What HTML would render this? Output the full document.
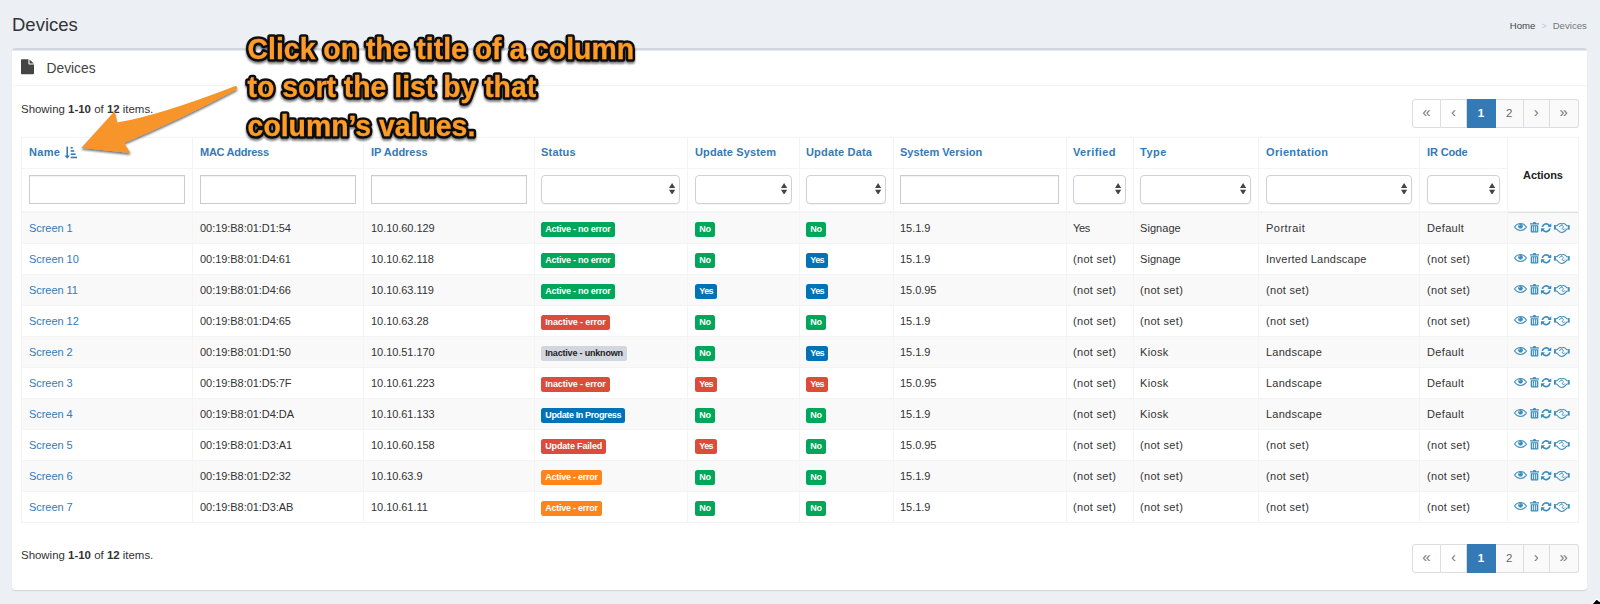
<!DOCTYPE html>
<html><head><meta charset="utf-8"><title>Devices</title>
<style>
*{box-sizing:border-box}
html,body{margin:0;padding:0}
body{width:1600px;height:604px;overflow:hidden;background:#ecf0f5;font-family:"Liberation Sans",sans-serif;font-size:11px;color:#333;position:relative}
.pt{position:absolute;left:12px;top:13.800px;margin:0;font-size:18.5px;line-height:22px;font-weight:normal;color:#333}
.bc{position:absolute;right:13.200px;top:19.800px;font-size:9.600px;line-height:12px;color:#444;white-space:nowrap}
.bc span+i+span{color:#777}
.bc i{font-style:normal;color:#c4c8cf;margin:0 6px;font-size:9px}
.box{position:absolute;left:12px;top:48px;width:1575px;height:542px;background:#fff;border-top:3px solid #d2d6de;border-radius:3px;box-shadow:0 1px 1px rgba(0,0,0,.12)}
/* coordinates inside .box are page coords minus (12,48); helper wrapper keeps page coords */
.box>*{position:absolute}
.bh{left:0;top:-3px;width:100%;height:38px;border-bottom:1px solid #f4f4f4}
.fi{position:absolute;left:9px;top:11px;width:13px;height:15.5px;fill:#444}
.bt{position:absolute;left:34.500px;top:11.800px;font-size:13.8px;line-height:18px;color:#444}
.sum{left:9px;font-size:11.450px;line-height:14px;letter-spacing:0;color:#333;margin-top:-51px}
.sum b{font-weight:bold}
.pg{right:8.500px;height:29px;margin-top:-51px;display:flex;font-size:11.5px;color:#666}
.pg span{display:block;height:29px;line-height:26px;text-align:center;background:#fafafa;border:1px solid #ddd;border-left-width:0;color:#666}
.pg .p0{border-left-width:1px;border-radius:3px 0 0 3px}
.pg .p9{border-radius:0 3px 3px 0}
.pg .act{background:#337ab7;border-color:#337ab7;color:#fff;font-weight:bold;line-height:27px}
table.gr{left:9px;top:89px;margin-top:-3px;width:1557px;table-layout:fixed;border-collapse:collapse;font-size:11px}
.gr th,.gr td{border:1px solid #f4f4f4;padding:0 0 0 7px;text-align:left;vertical-align:middle;white-space:nowrap;overflow:hidden;color:#333}
.gr tr{height:31px}
.gr tr.hr{height:31px}
.gr tr.fr{height:43px}
.gr tr.fr td{border-bottom:2px solid #f4f4f4}
.gr th.ac{border-bottom:2px solid #f4f4f4}
.gr th{font-weight:bold;color:#337ab7}
.gr th.ac{color:#222;text-align:center;padding:.5px 0 0 0;overflow:visible}
.gr a{color:#337ab7;text-decoration:none}
.gr th a{color:#337ab7}
.gr tbody tr:nth-child(odd) td{background:#f9f9f9}
.gr tbody td{letter-spacing:-.05px}
.in{height:29px;margin-right:7px;position:relative;top:-.5px;border:1px solid #ccc;background:#fff;box-shadow:inset 0 1px 1px rgba(0,0,0,.06)}
.se{height:29px;margin-right:7px;border:1px solid #ced1d7;border-radius:4px;background:#fff;position:relative;top:-.5px;box-shadow:0 1px 1px rgba(0,0,0,.05)}
.se svg{position:absolute;right:3.400px;top:6.900px;width:6.200px;height:11.700px;fill:#444}
.lb{display:inline-block;height:15px;line-height:15px;padding:0 4.250px;border-radius:2.500px;font-size:9px;font-weight:bold;color:#fff;letter-spacing:-.25px;vertical-align:middle;position:relative;top:1.500px}
.cg{background:#00a65a}.cb{background:#0073b7}.cr{background:#dd4b39}.co{background:#ff851b}.cd{background:#d2d6de;color:#222}
.gr th{position:relative}
.si{position:absolute;left:41.900px;top:8px;width:13.300px;height:13.300px;fill:#337ab7}
.ai{padding:0 !important}
.ai div{position:relative;height:30px;width:70px}
.ai svg{position:absolute;color:#3c8dbc;overflow:visible}
.a1{left:5.800px;top:10.600px;width:13px;height:8px}
.a2{left:21.900px;top:9.300px;width:9px;height:10.500px}
.a3{left:33.400px;top:10.600px;width:10.300px;height:9.400px}
.a4{left:45.800px;top:10.900px;width:15.700px;height:10px}
.pg .ch{font-size:15px;line-height:23.500px;color:#777}
.pg .wb{background:#fff}
.gr th a{position:relative;top:-1px}
.gr .k1{padding-left:6px}
.box::before{content:"";position:absolute;left:0;right:0;top:-1px;height:1px;background:rgba(255,255,255,.45)}
.gr th.ac::after{content:"";position:absolute;left:0;right:0;bottom:-2px;height:1px;background:#e0e0e0}

</style></head><body>
<svg width="0" height="0" style="position:absolute"><defs>
<path id="i-file" d="M0 0.800C0 0.350 0.350 0 0.800 0H8V4.800C8 5.250 8.350 5.600 8.800 5.600H14V15.200C14 15.650 13.650 16 13.200 16H0.800C0.350 16 0 15.650 0 15.200Z M9.200 0.100L13.800 4.400H9.200Z"/>
<g id="i-sort"><path d="M2.600 0.500h1.600v9.500h2L3.400 13.500 0.600 10h2z"/><rect x="7" y="1" width="2.200" height="1.700"/><rect x="7" y="4.400" width="3.800" height="1.700"/><rect x="7" y="7.800" width="5.200" height="1.700"/><rect x="7" y="11.200" width="6.800" height="1.700"/></g>
<g id="i-eye"><path d="M0.500 4C2.600 1 4.800 0.550 6.500 0.550S10.400 1 12.500 4C10.400 7 8.200 7.450 6.500 7.450S2.600 7 0.500 4Z" fill="none" stroke="currentColor" stroke-width="1.100"/><circle cx="6.500" cy="3.300" r="2.350" fill="currentColor"/><circle cx="5.700" cy="2.500" r="0.700" fill="#fff" fill-opacity="0.450"/></g>
<g id="i-trash" fill="currentColor"><path fill-rule="evenodd" d="M2.900 1.300L3.500 0.100h2L6.100 1.300H9v1.300H0V1.300zM0.700 3.200h7.600V9.700c0 0.450-0.350 0.800-0.800 0.800H1.500c-0.450 0-0.800-0.350-0.800-0.800zM2.250 4.300v5h0.850v-5zM4.080 4.300v5h0.850v-5zM5.900 4.300v5h0.850v-5z"/></g>
<g id="i-ref" fill="currentColor"><path d="M10.300 0.200V4.100H6.400L7.570 2.930A3 3 0 0 0 2.200 4.100H0.500A4.700 4.700 0 0 1 8.780 1.720Z"/><path d="M0 9.200V5.300H3.900L2.730 6.470A3 3 0 0 0 8.100 5.300H9.800A4.700 4.700 0 0 1 1.520 7.680Z"/></g>
<g id="i-hand"><rect x="0" y="2.100" width="1.900" height="4.500" fill="currentColor"/><rect x="13.800" y="2.100" width="1.900" height="4.500" fill="currentColor"/><path d="M1.900 2.700H3C4.600 0.900 5.600 0.550 6.500 0.550C7.300 0.550 7.600 0.800 7.850 1C8.200 0.750 8.600 0.550 9.400 0.550C10.400 0.550 11.300 1 12.800 2.700H13.800M13.800 6.100H12.900C10.600 8.700 9.200 9.450 7.850 9.450C6.400 9.450 5 8.500 2.800 6.100H1.900" fill="none" stroke="currentColor" stroke-width="1.050"/><path d="M5.300 4C6.200 2.300 7.600 1.900 8.700 2.700C9.900 3.600 9.300 4.700 8.500 5.100C7.800 5.500 8.300 6.300 9.400 6.500C10.200 6.600 10.700 6.100 11 5.600" fill="none" stroke="currentColor" stroke-width="0.950"/></g>
</defs></svg>

<h1 class="pt">Devices</h1>
<div class="bc"><span>Home</span><i>&gt;</i><span>Devices</span></div>
<div class="box">
<div class="bh"><svg class="fi" viewBox="0 0 14 16"><use href="#i-file"/></svg><span class="bt">Devices</span></div>
<div class="sum" style="top:102px">Showing <b>1-10</b> of <b>12</b> items.</div>
<div class="pg" style="top:99px">
<span class="p0 ch wb" style="width:29px">&laquo;</span><span class="ch wb" style="width:26px">&lsaquo;</span><span class="act" style="width:29px">1</span><span style="width:27.500px">2</span><span class="ch" style="width:26.500px">&rsaquo;</span><span class="p9 ch" style="width:28.500px">&raquo;</span></div>
<table class="gr"><colgroup><col style="width:171px"><col style="width:171px"><col style="width:171px"><col style="width:153px"><col style="width:112px"><col style="width:94px"><col style="width:173px"><col style="width:67px"><col style="width:125px"><col style="width:161px"><col style="width:88px"><col style="width:71px"></colgroup>
<thead><tr class="hr">
<th><a style="letter-spacing:0.34px">Name</a> <svg class="si" viewBox="0 0 14 14"><use href="#i-sort"/></svg></th>
<th><a style="letter-spacing:-0.27px">MAC Address</a></th>
<th><a style="letter-spacing:-0.02px">IP Address</a></th>
<th class="k1"><a style="letter-spacing:0.19px">Status</a></th>
<th><a style="letter-spacing:0.13px">Update System</a></th>
<th class="k1"><a style="letter-spacing:0.18px">Update Data</a></th>
<th class="k1"><a style="letter-spacing:0.02px">System Version</a></th>
<th class="k1"><a style="letter-spacing:0.38px">Verified</a></th>
<th class="k1"><a style="letter-spacing:0.51px">Type</a></th>
<th><a style="letter-spacing:0.34px">Orientation</a></th>
<th><a style="letter-spacing:-0.14px">IR Code</a></th>
<th rowspan="2" class="ac" style="letter-spacing:-0.07px">Actions</th></tr>
<tr class="fr">
<td><div class="in"></div></td>
<td><div class="in"></div></td>
<td><div class="in"></div></td>
<td class="k1"><div class="se"><svg viewBox="0 0 6.200 11.700"><path d="M3.100 0L6.200 4.900H0Z M3.100 11.700L0 6.800H6.200Z"/></svg></div></td>
<td><div class="se"><svg viewBox="0 0 6.200 11.700"><path d="M3.100 0L6.200 4.900H0Z M3.100 11.700L0 6.800H6.200Z"/></svg></div></td>
<td class="k1"><div class="se"><svg viewBox="0 0 6.200 11.700"><path d="M3.100 0L6.200 4.900H0Z M3.100 11.700L0 6.800H6.200Z"/></svg></div></td>
<td class="k1"><div class="in"></div></td>
<td class="k1"><div class="se"><svg viewBox="0 0 6.200 11.700"><path d="M3.100 0L6.200 4.900H0Z M3.100 11.700L0 6.800H6.200Z"/></svg></div></td>
<td class="k1"><div class="se"><svg viewBox="0 0 6.200 11.700"><path d="M3.100 0L6.200 4.900H0Z M3.100 11.700L0 6.800H6.200Z"/></svg></div></td>
<td><div class="se"><svg viewBox="0 0 6.200 11.700"><path d="M3.100 0L6.200 4.900H0Z M3.100 11.700L0 6.800H6.200Z"/></svg></div></td>
<td><div class="se"><svg viewBox="0 0 6.200 11.700"><path d="M3.100 0L6.200 4.900H0Z M3.100 11.700L0 6.800H6.200Z"/></svg></div></td>
</tr></thead><tbody>
<tr>
<td><a>Screen 1</a></td><td>00:19:B8:01:D1:54</td><td>10.10.60.129</td>
<td class="k1"><span class="lb cg">Active - no error</span></td>
<td><span class="lb cg">No</span></td>
<td class="k1"><span class="lb cg">No</span></td>
<td class="k1" style="letter-spacing:-0.02px">15.1.9</td>
<td class="k1" style="letter-spacing:-0.38px">Yes</td>
<td class="k1" style="letter-spacing:0.05px">Signage</td>
<td style="letter-spacing:0.48px">Portrait</td>
<td style="letter-spacing:0.34px">Default</td>
<td class="ai"><div><svg class="a1" viewBox="0 0 13 8"><use href="#i-eye"/></svg><svg class="a2" viewBox="0 0 9 10.500"><use href="#i-trash"/></svg><svg class="a3" viewBox="0 0 10.300 9.400"><use href="#i-ref"/></svg><svg class="a4" viewBox="0 0 15.700 10"><use href="#i-hand"/></svg></div></td></tr>
<tr>
<td><a>Screen 10</a></td><td>00:19:B8:01:D4:61</td><td>10.10.62.118</td>
<td class="k1"><span class="lb cg">Active - no error</span></td>
<td><span class="lb cg">No</span></td>
<td class="k1"><span class="lb cb" style="letter-spacing:-0.6px">Yes</span></td>
<td class="k1" style="letter-spacing:-0.02px">15.1.9</td>
<td class="k1" style="letter-spacing:0.31px">(not set)</td>
<td class="k1" style="letter-spacing:0.05px">Signage</td>
<td style="letter-spacing:0.22px">Inverted Landscape</td>
<td style="letter-spacing:0.31px">(not set)</td>
<td class="ai"><div><svg class="a1" viewBox="0 0 13 8"><use href="#i-eye"/></svg><svg class="a2" viewBox="0 0 9 10.500"><use href="#i-trash"/></svg><svg class="a3" viewBox="0 0 10.300 9.400"><use href="#i-ref"/></svg><svg class="a4" viewBox="0 0 15.700 10"><use href="#i-hand"/></svg></div></td></tr>
<tr>
<td><a>Screen 11</a></td><td>00:19:B8:01:D4:66</td><td>10.10.63.119</td>
<td class="k1"><span class="lb cg">Active - no error</span></td>
<td><span class="lb cb" style="letter-spacing:-0.6px">Yes</span></td>
<td class="k1"><span class="lb cb" style="letter-spacing:-0.6px">Yes</span></td>
<td class="k1">15.0.95</td>
<td class="k1" style="letter-spacing:0.31px">(not set)</td>
<td class="k1" style="letter-spacing:0.31px">(not set)</td>
<td style="letter-spacing:0.31px">(not set)</td>
<td style="letter-spacing:0.31px">(not set)</td>
<td class="ai"><div><svg class="a1" viewBox="0 0 13 8"><use href="#i-eye"/></svg><svg class="a2" viewBox="0 0 9 10.500"><use href="#i-trash"/></svg><svg class="a3" viewBox="0 0 10.300 9.400"><use href="#i-ref"/></svg><svg class="a4" viewBox="0 0 15.700 10"><use href="#i-hand"/></svg></div></td></tr>
<tr>
<td><a>Screen 12</a></td><td>00:19:B8:01:D4:65</td><td>10.10.63.28</td>
<td class="k1"><span class="lb cr" style="letter-spacing:-0.13px">Inactive - error</span></td>
<td><span class="lb cg">No</span></td>
<td class="k1"><span class="lb cg">No</span></td>
<td class="k1" style="letter-spacing:-0.02px">15.1.9</td>
<td class="k1" style="letter-spacing:0.31px">(not set)</td>
<td class="k1" style="letter-spacing:0.31px">(not set)</td>
<td style="letter-spacing:0.31px">(not set)</td>
<td style="letter-spacing:0.31px">(not set)</td>
<td class="ai"><div><svg class="a1" viewBox="0 0 13 8"><use href="#i-eye"/></svg><svg class="a2" viewBox="0 0 9 10.500"><use href="#i-trash"/></svg><svg class="a3" viewBox="0 0 10.300 9.400"><use href="#i-ref"/></svg><svg class="a4" viewBox="0 0 15.700 10"><use href="#i-hand"/></svg></div></td></tr>
<tr>
<td><a>Screen 2</a></td><td>00:19:B8:01:D1:50</td><td>10.10.51.170</td>
<td class="k1"><span class="lb cd" style="letter-spacing:-0.19px">Inactive - unknown</span></td>
<td><span class="lb cg">No</span></td>
<td class="k1"><span class="lb cb" style="letter-spacing:-0.6px">Yes</span></td>
<td class="k1" style="letter-spacing:-0.02px">15.1.9</td>
<td class="k1" style="letter-spacing:0.31px">(not set)</td>
<td class="k1" style="letter-spacing:0.35px">Kiosk</td>
<td style="letter-spacing:0.25px">Landscape</td>
<td style="letter-spacing:0.34px">Default</td>
<td class="ai"><div><svg class="a1" viewBox="0 0 13 8"><use href="#i-eye"/></svg><svg class="a2" viewBox="0 0 9 10.500"><use href="#i-trash"/></svg><svg class="a3" viewBox="0 0 10.300 9.400"><use href="#i-ref"/></svg><svg class="a4" viewBox="0 0 15.700 10"><use href="#i-hand"/></svg></div></td></tr>
<tr>
<td><a>Screen 3</a></td><td>00:19:B8:01:D5:7F</td><td>10.10.61.223</td>
<td class="k1"><span class="lb cr" style="letter-spacing:-0.13px">Inactive - error</span></td>
<td><span class="lb cr" style="letter-spacing:-0.6px">Yes</span></td>
<td class="k1"><span class="lb cr" style="letter-spacing:-0.6px">Yes</span></td>
<td class="k1">15.0.95</td>
<td class="k1" style="letter-spacing:0.31px">(not set)</td>
<td class="k1" style="letter-spacing:0.35px">Kiosk</td>
<td style="letter-spacing:0.25px">Landscape</td>
<td style="letter-spacing:0.34px">Default</td>
<td class="ai"><div><svg class="a1" viewBox="0 0 13 8"><use href="#i-eye"/></svg><svg class="a2" viewBox="0 0 9 10.500"><use href="#i-trash"/></svg><svg class="a3" viewBox="0 0 10.300 9.400"><use href="#i-ref"/></svg><svg class="a4" viewBox="0 0 15.700 10"><use href="#i-hand"/></svg></div></td></tr>
<tr>
<td><a>Screen 4</a></td><td>00:19:B8:01:D4:DA</td><td>10.10.61.133</td>
<td class="k1"><span class="lb cb" style="letter-spacing:-0.37px">Update In Progress</span></td>
<td><span class="lb cg">No</span></td>
<td class="k1"><span class="lb cg">No</span></td>
<td class="k1" style="letter-spacing:-0.02px">15.1.9</td>
<td class="k1" style="letter-spacing:0.31px">(not set)</td>
<td class="k1" style="letter-spacing:0.35px">Kiosk</td>
<td style="letter-spacing:0.25px">Landscape</td>
<td style="letter-spacing:0.34px">Default</td>
<td class="ai"><div><svg class="a1" viewBox="0 0 13 8"><use href="#i-eye"/></svg><svg class="a2" viewBox="0 0 9 10.500"><use href="#i-trash"/></svg><svg class="a3" viewBox="0 0 10.300 9.400"><use href="#i-ref"/></svg><svg class="a4" viewBox="0 0 15.700 10"><use href="#i-hand"/></svg></div></td></tr>
<tr>
<td><a>Screen 5</a></td><td>00:19:B8:01:D3:A1</td><td>10.10.60.158</td>
<td class="k1"><span class="lb cr" style="letter-spacing:-0.17px">Update Failed</span></td>
<td><span class="lb cr" style="letter-spacing:-0.6px">Yes</span></td>
<td class="k1"><span class="lb cg">No</span></td>
<td class="k1">15.0.95</td>
<td class="k1" style="letter-spacing:0.31px">(not set)</td>
<td class="k1" style="letter-spacing:0.31px">(not set)</td>
<td style="letter-spacing:0.31px">(not set)</td>
<td style="letter-spacing:0.31px">(not set)</td>
<td class="ai"><div><svg class="a1" viewBox="0 0 13 8"><use href="#i-eye"/></svg><svg class="a2" viewBox="0 0 9 10.500"><use href="#i-trash"/></svg><svg class="a3" viewBox="0 0 10.300 9.400"><use href="#i-ref"/></svg><svg class="a4" viewBox="0 0 15.700 10"><use href="#i-hand"/></svg></div></td></tr>
<tr>
<td><a>Screen 6</a></td><td>00:19:B8:01:D2:32</td><td>10.10.63.9</td>
<td class="k1"><span class="lb co">Active - error</span></td>
<td><span class="lb cg">No</span></td>
<td class="k1"><span class="lb cg">No</span></td>
<td class="k1" style="letter-spacing:-0.02px">15.1.9</td>
<td class="k1" style="letter-spacing:0.31px">(not set)</td>
<td class="k1" style="letter-spacing:0.31px">(not set)</td>
<td style="letter-spacing:0.31px">(not set)</td>
<td style="letter-spacing:0.31px">(not set)</td>
<td class="ai"><div><svg class="a1" viewBox="0 0 13 8"><use href="#i-eye"/></svg><svg class="a2" viewBox="0 0 9 10.500"><use href="#i-trash"/></svg><svg class="a3" viewBox="0 0 10.300 9.400"><use href="#i-ref"/></svg><svg class="a4" viewBox="0 0 15.700 10"><use href="#i-hand"/></svg></div></td></tr>
<tr>
<td><a>Screen 7</a></td><td>00:19:B8:01:D3:AB</td><td>10.10.61.11</td>
<td class="k1"><span class="lb co">Active - error</span></td>
<td><span class="lb cg">No</span></td>
<td class="k1"><span class="lb cg">No</span></td>
<td class="k1" style="letter-spacing:-0.02px">15.1.9</td>
<td class="k1" style="letter-spacing:0.31px">(not set)</td>
<td class="k1" style="letter-spacing:0.31px">(not set)</td>
<td style="letter-spacing:0.31px">(not set)</td>
<td style="letter-spacing:0.31px">(not set)</td>
<td class="ai"><div><svg class="a1" viewBox="0 0 13 8"><use href="#i-eye"/></svg><svg class="a2" viewBox="0 0 9 10.500"><use href="#i-trash"/></svg><svg class="a3" viewBox="0 0 10.300 9.400"><use href="#i-ref"/></svg><svg class="a4" viewBox="0 0 15.700 10"><use href="#i-hand"/></svg></div></td></tr>
</tbody></table>
<div class="sum" style="top:547.500px">Showing <b>1-10</b> of <b>12</b> items.</div>
<div class="pg" style="top:544px">
<span class="p0 ch wb" style="width:29px">&laquo;</span><span class="ch wb" style="width:26px">&lsaquo;</span><span class="act" style="width:29px">1</span><span style="width:27.500px">2</span><span class="ch" style="width:26.500px">&rsaquo;</span><span class="p9 ch" style="width:28.500px">&raquo;</span></div>
</div>
<svg class="ann" width="1600" height="604" viewBox="0 0 1600 604" style="position:absolute;left:0;top:0;pointer-events:none">
<defs><filter id="sh" x="-5%" y="-20%" width="110%" height="150%"><feGaussianBlur in="SourceAlpha" stdDeviation="1.200"/><feOffset dx="0" dy="2" result="o"/><feComponentTransfer><feFuncA type="linear" slope="0.550"/></feComponentTransfer><feMerge><feMergeNode/><feMergeNode in="SourceGraphic"/></feMerge></filter></defs>
<g filter="url(#sh)">
<path d="M81.400 147.800 L114.800 111 L117.200 122.600 Q160 115.300 234.700 86.300 A1.700 1.700 0 0 1 236.300 89.500 Q180 119.500 124.100 142.900 L130.700 152.900 Z" fill="#f8952a"/>
</g>
<g filter="url(#sh)" font-family="Liberation Sans, sans-serif" font-weight="bold" font-size="28.400px">
<g fill="#111" stroke="#111" stroke-width="5.400" stroke-linejoin="round">
<text transform="translate(247.600 58.600) scale(1 1.045)">Click on the title of a column</text>
<text transform="translate(247.600 97.300) scale(1 1.045)">to sort the list by that</text>
<text transform="translate(247.600 135.600) scale(1 1.045)">column&#8217;s values.</text>
</g>
<g fill="#fd9c26" stroke="#fd9c26" stroke-width="0.300">
<text transform="translate(247.600 58.600) scale(1 1.045)">Click on the title of a column</text>
<text transform="translate(247.600 97.300) scale(1 1.045)">to sort the list by that</text>
<text transform="translate(247.600 135.600) scale(1 1.045)">column&#8217;s values.</text>
</g>
</g>
<path d="M1596.800 598.600 L1591 605 L1601 605 L1601 601.800 L1598.600 600.600 Z" fill="#000" stroke="#fff" stroke-width="1.400" stroke-linejoin="round"/>
</svg>

</body></html>
